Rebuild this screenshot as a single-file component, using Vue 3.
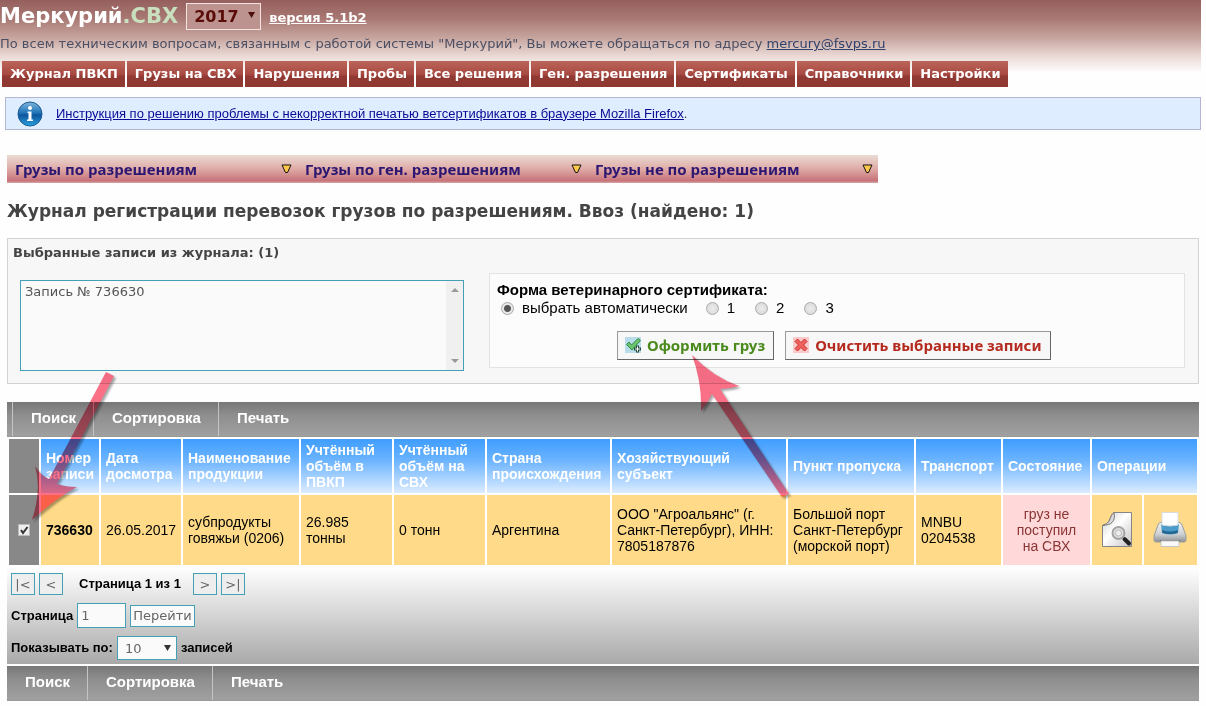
<script setup>
import { ref } from 'vue'

const year = ref('2017')
const form = ref('auto')
const selected = ref('Запись № 736630')
const checked = ref(true)
const page = ref('1')
const perPage = ref('10')

const menu = ['Журнал ПВКП', 'Грузы на СВХ', 'Нарушения', 'Пробы', 'Все решения', 'Ген. разрешения', 'Сертификаты', 'Справочники', 'Настройки']
const submenu = ['Грузы по разрешениям', 'Грузы по ген. разрешениям', 'Грузы не по разрешениям']
const tools = ['Поиск', 'Сортировка', 'Печать']
const forms = [
  { value: 'auto', label: 'выбрать автоматически' },
  { value: '1', label: '1' },
  { value: '2', label: '2' },
  { value: '3', label: '3' }
]
</script>

<template>
  <div class="page">
    <header class="top">
      <div class="brand-row">
        <h1 class="brand">Меркурий<span>.СВХ</span></h1>
        <span class="select-wrap">
          <select v-model="year" class="year" aria-label="Год"><option>2017</option><option>2016</option></select>
          <svg class="caret dark" viewBox="0 0 7 6"><path d="M0 0h7L3.500 6z" /></svg>
        </span>
        <a href="#" class="version">версия 5.1b2</a>
      </div>
      <p class="support">По всем техническим вопросам, связанным с работой системы "Меркурий", Вы можете обращаться по адресу <a href="#">mercury@fsvps.ru</a></p>
      <nav class="menu"><a v-for="m in menu" :key="m" href="#">{{ m }}</a></nav>
    </header>

    <div class="notice">
      <svg class="info" viewBox="0 0 26 26">
        <defs>
          <linearGradient id="infoFill" x1="0" y1="0" x2="0" y2="1"><stop offset="0" stop-color="#7fb6dc" /><stop offset=".45" stop-color="#1f74b8" /><stop offset=".55" stop-color="#0d559c" /><stop offset="1" stop-color="#2aa3e0" /></linearGradient>
        </defs>
        <circle cx="13" cy="13" r="12" fill="url(#infoFill)" stroke="#1c5b93" />
        <circle cx="13" cy="7" r="2" fill="#fff" />
        <path d="M10.500 10.500h4v8H16V20h-6v-1.500h1.500V12h-1z" fill="#fff" />
      </svg>
      <span><a href="#">Инструкция по решению проблемы с некорректной печатью ветсертификатов в браузере Mozilla Firefox</a>.</span>
    </div>

    <main class="content">
      <nav class="submenu">
        <a v-for="s in submenu" :key="s" href="#">
          {{ s }}
          <svg viewBox="0 0 11 10"><path d="M1 1h9L6.500 8.500h-2z" fill="#ffc94a" stroke="#111" /></svg>
        </a>
      </nav>

      <h2 class="title">Журнал регистрации перевозок грузов по разрешениям. Ввоз (найдено: 1)</h2>

      <section class="panel">
        <label class="panel-title" for="records">Выбранные записи из журнала: (1)</label>
        <div class="panel-body">
          <div class="records-wrap">
            <textarea id="records" v-model="selected" class="records" readonly></textarea>
            <div class="scroll">
              <svg viewBox="0 0 8 4"><path d="M0 4h8L4 0z" /></svg>
              <svg viewBox="0 0 8 4"><path d="M0 0h8L4 4z" /></svg>
            </div>
          </div>
          <div class="cert">
            <strong class="cert-title">Форма ветеринарного сертификата:</strong>
            <div class="radios">
              <label v-for="f in forms" :key="f.value"><input v-model="form" type="radio" name="form" :value="f.value">{{ f.label }}</label>
            </div>
            <div class="actions">
              <button type="button" class="ok">
                <svg viewBox="0 0 16 16">
                  <rect width="16" height="16" fill="#b9dcea" />
                  <path d="M1.500 7.500 4 5l2.500 3L13 1.500 15.500 3.500 7 13z" fill="#6cc46c" stroke="#2f8a45" />
                  <path d="M11 8.500h3v2h2v3h-2v2h-3v-2H9v-3h2z" fill="#234b3a" />
                  <path d="M12 9.500h1v2h2v1h-2v2h-1v-2h-2v-1h2z" fill="#fff" />
                </svg>
                Оформить груз
              </button>
              <button type="button" class="clear">
                <svg viewBox="0 0 16 16">
                  <rect width="16" height="16" fill="#fbc9c9" />
                  <path d="M2 4.500 4.500 2 8 5.500 11.500 2 14 4.500 10.500 8l3.500 3.500-2.500 2.500L8 10.500 4.500 14 2 11.500 5.500 8z" fill="#f0605c" stroke="#c9302c" />
                </svg>
                Очистить выбранные записи
              </button>
            </div>
          </div>
        </div>
      </section>

      <nav class="tools first"><a v-for="t in tools" :key="t" href="#">{{ t }}</a></nav>

      <table class="journal">
        <colgroup>
          <col class="w30"><col class="w58"><col class="w80"><col class="w116"><col class="w91"><col class="w91"><col class="w123"><col><col class="w126"><col class="w85"><col class="w87"><col class="w50"><col class="w53">
        </colgroup>
        <thead>
          <tr>
            <th class="pick"></th>
            <th>Номер записи</th><th>Дата досмотра</th><th>Наименование продукции</th><th>Учтённый объём в ПВКП</th><th>Учтённый объём на СВХ</th><th>Страна происхождения</th><th>Хозяйствующий субъект</th><th>Пункт пропуска</th><th>Транспорт</th><th>Состояние</th><th colspan="2">Операции</th>
          </tr>
        </thead>
        <tbody>
          <tr>
            <td class="pick">
              <span class="check">
                <input v-model="checked" type="checkbox" aria-label="Выбрать запись 736630">
                <svg v-if="checked" viewBox="0 0 12 12"><path d="m3 6 2 3 4.500-6" fill="none" stroke="#333" stroke-width="2" /></svg>
              </span>
            </td>
            <td><b>736630</b></td>
            <td>26.05.2017</td>
            <td>субпродукты говяжьи (0206)</td>
            <td>26.985 тонны</td>
            <td>0 тонн</td>
            <td>Аргентина</td>
            <td>ООО "Агроальянс" (г. Санкт-Петербург), ИНН: 7805187876</td>
            <td>Большой порт Санкт-Петербург (морской порт)</td>
            <td>MNBU 0204538</td>
            <td class="state">груз не поступил на СВХ</td>
            <td class="op">
              <button type="button" aria-label="Просмотр">
                <svg viewBox="0 0 34 36">
                  <defs><linearGradient id="sheet" x1="0" y1="0" x2="1" y2="1"><stop offset="0" stop-color="#cfcfcf" /><stop offset=".45" stop-color="#fff" /><stop offset="1" stop-color="#c4c4c4" /></linearGradient></defs>
                  <path d="M14 .5h17.500v34h-29v-21C7 12 9 10 10 7s2-5 4-6.500z" fill="url(#sheet)" stroke="#858585" />
                  <path d="M2.500 13.500C7 12 9 10 10 7s2-5 4-6.500c1 5 0 8-2 10s-5 2.500-9.500 3z" fill="#dcdcdc" stroke="#777" />
                  <path d="m24.500 27 4.500 4.500" stroke="#222" stroke-width="4" stroke-linecap="round" />
                  <circle cx="18.500" cy="21" r="6" fill="#dedede" stroke="#a5a5a5" stroke-width="2" />
                  <circle cx="18.500" cy="21" r="3" fill="#eee" stroke="#bbb" />
                </svg>
              </button>
            </td>
            <td class="op">
              <button type="button" aria-label="Печать записи">
                <svg viewBox="0 0 34 36">
                  <defs><linearGradient id="body" x1="0" y1="0" x2="0" y2="1"><stop offset="0" stop-color="#f4f4f4" /><stop offset=".6" stop-color="#cfd2d4" /><stop offset="1" stop-color="#8c9093" /></linearGradient></defs>
                  <path d="M5 13q1-3 4-3h16q3 0 4 3l3 8q1 2 1 4v3q0 2-2 2H3q-2 0-2-2v-3q0-2 1-4z" fill="url(#body)" stroke="#999da0" />
                  <path d="M8 12h18l-1 9q-8 3-16 0z" fill="#4b9cc9" />
                  <path d="M9 18q8 3 16 0l-.5 3q-7.500 2-15 0z" fill="#23658f" />
                  <path d="M9 .5h16V13q-8 2-16 0z" fill="#fff" stroke="#d8dcde" />
                  <path d="M7 28h20v2H7z" fill="#6f7376" />
                  <path d="M8 29h18v5.500H8z" fill="#fafafa" stroke="#c5c5c5" />
                </svg>
              </button>
            </td>
          </tr>
        </tbody>
      </table>

      <div class="pager">
        <div class="line nav">
          <button type="button">|&lt;</button><button type="button">&lt;</button>
          <span class="count">Страница 1 из 1</span>
          <button type="button">&gt;</button><button type="button">&gt;|</button>
        </div>
        <div class="line goto">
          <label for="page">Страница</label><input id="page" v-model="page" type="text"><button type="button">Перейти</button>
        </div>
        <div class="line">
          <label for="per">Показывать по:</label>
          <span class="select-wrap">
            <select id="per" v-model="perPage" class="per"><option>10</option><option>20</option></select>
            <svg class="caret" viewBox="0 0 7 6"><path d="M0 0h7L3.500 6z" /></svg>
          </span>
          <span>записей</span>
        </div>
      </div>

      <nav class="tools"><a v-for="t in tools" :key="t" href="#">{{ t }}</a></nav>
    </main>

    <svg class="pointer" width="800" height="540" viewBox="0 0 800 540">
      <path d="M106 372 114 376 57 484Q66 487 77 487Q56 498 32 520Q42 488 35 466Q40 475 49 479z" />
      <path d="M692 355Q713 377 739 386Q729 389 720 389L789 494 782 497 712 394Q707 404 701 411Q702 382 692 355z" />
    </svg>
  </div>
</template>

<style>
body { background: #fefefe; }
</style>

<style scoped>
* { box-sizing: border-box; }
.page { position: relative; padding-right: 5px; padding-bottom: 5px; font: 14px/16px "Liberation Sans", Arial, sans-serif; color: #000; }
.top { padding-bottom: 10px; font-family: "DejaVu Sans", Verdana, sans-serif; background: linear-gradient(#955f5d 0, #a87873 18px, #c7a59f 38px, #ead9d5 56px, #fefefe 73px); }
.brand-row { display: flex; align-items: center; gap: 8px; height: 32px; }
.brand { margin: 0; font-size: 21px; line-height: 28px; color: #fff; }
.brand span { color: #c8e0bd; }
.select-wrap { position: relative; display: inline-flex; }
select { appearance: none; margin: 0; border-radius: 0; outline: 0; }
.year { width: 75px; height: 27px; padding: 0 7px; border: 1px solid #f3e4e1; background: #bd9390; color: #5a0d08; font: bold 16px "DejaVu Sans", Verdana, sans-serif; }
.caret { position: absolute; right: 6px; top: 9px; width: 7px; height: 6px; fill: #333; pointer-events: none; }
.caret.dark { fill: #4a0f0a; }
.version { padding-top: 4px; font-size: 13px; font-weight: bold; color: #fff; }
.support { margin: 0; padding-top: 3px; font-size: 13px; line-height: 17px; color: #4b4f63; }
.support a { color: #2f426c; }
.menu { display: flex; gap: 2px; margin-top: 9px; padding-left: 2px; }
.menu a { padding: 0 7px 0 8px; font-size: 13px; line-height: 26px; font-weight: bold; color: #fff; text-decoration: none; white-space: nowrap; background: linear-gradient(#bb6459, #a94b43 50%, #913a33 60%, #8f3832); }
.notice { display: flex; align-items: center; gap: 13px; height: 33px; margin-left: 5px; padding-left: 11px; border: 1px solid #b3b5d2; background: #deedff; font-size: 13px; color: #333; }
.notice a { color: #0a0a96; }
.info { width: 26px; height: 26px; }
.content { padding: 25px 2px 0 7px; }
.submenu { display: grid; grid-template-columns: 290px 290px 291px; width: 871px; background: linear-gradient(#eadbd3, #dfaaa6 50%, #c6737a 92%, #d9a7a7); }
.submenu a { display: flex; align-items: center; justify-content: space-between; padding: 0 5px 0 8px; font: bold 15px/28px "Noto Sans", Tahoma, sans-serif; color: #2b1672; text-decoration: none; }
.submenu svg { width: 11px; height: 10px; }
.title { margin: 18px 0 16px; font: bold 17px/21px "DejaVu Sans", Verdana, sans-serif; color: #444; }
.panel { border: 1px solid #d2d2d2; background: #f7f7f7; padding: 5px 13px 12px 5px; }
.panel-title { display: block; font: bold 13px/18px "DejaVu Sans", Verdana, sans-serif; color: #444; }
.panel-body { display: flex; align-items: flex-start; gap: 25px; padding: 11px 0 0 7px; }
.records-wrap { display: flex; width: 444px; height: 91px; margin-top: 7px; border: 1px solid #46a0b5; background: #fafafa; }
.records { flex: 1; min-width: 0; padding: 3px 4px; border: 0; outline: 0; resize: none; background: transparent; font: 13px/16px "DejaVu Sans", Verdana, sans-serif; color: #555; }
.scroll { display: flex; flex-direction: column; justify-content: space-between; align-items: center; width: 17px; padding: 7px 0; background: #f0f0f0; }
.scroll svg { width: 8px; height: 4px; fill: #999; }
.cert { flex: 1; height: 95px; padding: 7px 7px; border: 1px solid #e3e3e0; background: #fcfcfc; }
.cert-title { display: block; font-size: 15px; line-height: 18px; }
.radios { display: flex; gap: 20px; padding-left: 4px; font-size: 15px; line-height: 18px; }
.radios label { display: flex; align-items: center; gap: 8px; }
.radios label:first-child { margin-right: -2px; }
input[type="radio"] { appearance: none; width: 13px; height: 13px; margin: 0; border: 1px solid #aaa; border-radius: 50%; background: radial-gradient(#ececec, #d5d5d5); }
input[type="radio"]:checked { background: radial-gradient(#555 0 3px, #e8e8e8 4px); }
.actions { display: flex; gap: 11px; margin-top: 14px; padding-left: 120px; }
.actions button { display: flex; align-items: center; gap: 6px; height: 29px; padding: 0 8px 2px 7px; border: 1px solid #999; border-right-color: #666; border-bottom-color: #666; background: #f7f7f7; font: bold 15px "Noto Sans", Tahoma, sans-serif; white-space: nowrap; }
.actions svg { width: 16px; height: 16px; }
.actions .ok { color: #4a8a1c; }
.actions .clear { color: #b52a1e; }
.tools { display: flex; height: 35px; background: linear-gradient(#777, #8f8f8f 40%, #a0a0a0); border-bottom: 1px solid #999; }
.tools a { padding: 0 17px 0 18px; border-right: 1px solid #c4c4c4; color: #fff; font-size: 15px; font-weight: bold; line-height: 32px; text-decoration: none; }
.tools a:last-child { border-right: 0; }
.tools.first { margin-top: 18px; padding-left: 5px; }
.tools.first a:first-child { border-left: 1px solid #c4c4c4; }
.journal { width: 100%; table-layout: fixed; border-spacing: 2px; background: #fff; }
.journal th { height: 54px; padding: 0 5px; font-size: 14px; line-height: 16px; text-align: left; color: #fff; background: linear-gradient(#3f9dff, #6cb4ff 40%, #dcecff); }
.journal td { height: 70px; padding: 0 5px; line-height: 16px; background: #ffdb89; }
.journal .pick { padding: 0; background: #888; text-align: center; }
.journal .state { background: #ffd9d9; color: #8a3434; text-align: center; }
.journal .op { padding: 0; text-align: center; }
.op button { display: block; margin: 0 auto; padding: 0; border: 0; background: none; }
.op svg { display: block; width: 34px; height: 36px; }
.check { position: relative; display: block; width: 12px; height: 12px; margin: 0 auto; }
.check input { appearance: none; display: block; width: 12px; height: 12px; margin: 0; border: 1px solid #bbb; background: #eee; }
.check svg { position: absolute; inset: 0; pointer-events: none; }
.w30 { width: 30px; } .w58 { width: 58px; } .w80 { width: 80px; } .w116 { width: 116px; } .w91 { width: 91px; } .w123 { width: 123px; } .w126 { width: 126px; } .w85 { width: 85px; } .w87 { width: 87px; } .w50 { width: 50px; } .w53 { width: 53px; }
.pager { display: flex; flex-direction: column; gap: 8px; margin-bottom: 2px; padding: 6px 4px 4px; background: linear-gradient(#fff, #eee 20%, #a9a9a9); font-size: 13px; font-weight: bold; }
.line { display: flex; align-items: center; gap: 4px; }
.pager button, .pager input, .per { height: 22px; border: 1px solid #46a0b5; border-radius: 0; font: 13px "DejaVu Sans", Verdana, sans-serif; color: #666; background: #fafafa; }
.pager button { padding: 0 2px; }
.nav button { width: 24px; background: #eee; }
.pager input { width: 49px; height: 25px; padding: 0 3px; outline: 0; }
.count { padding: 0 8px 0 12px; }
.pager .per { width: 60px; height: 24px; padding: 0 7px; }
.pointer { position: absolute; left: 0; top: 0; pointer-events: none; mix-blend-mode: multiply; filter: drop-shadow(2px 2px 1px rgba(0, 0, 0, .35)); }
.pointer path { fill: #fa7088; }
</style>
